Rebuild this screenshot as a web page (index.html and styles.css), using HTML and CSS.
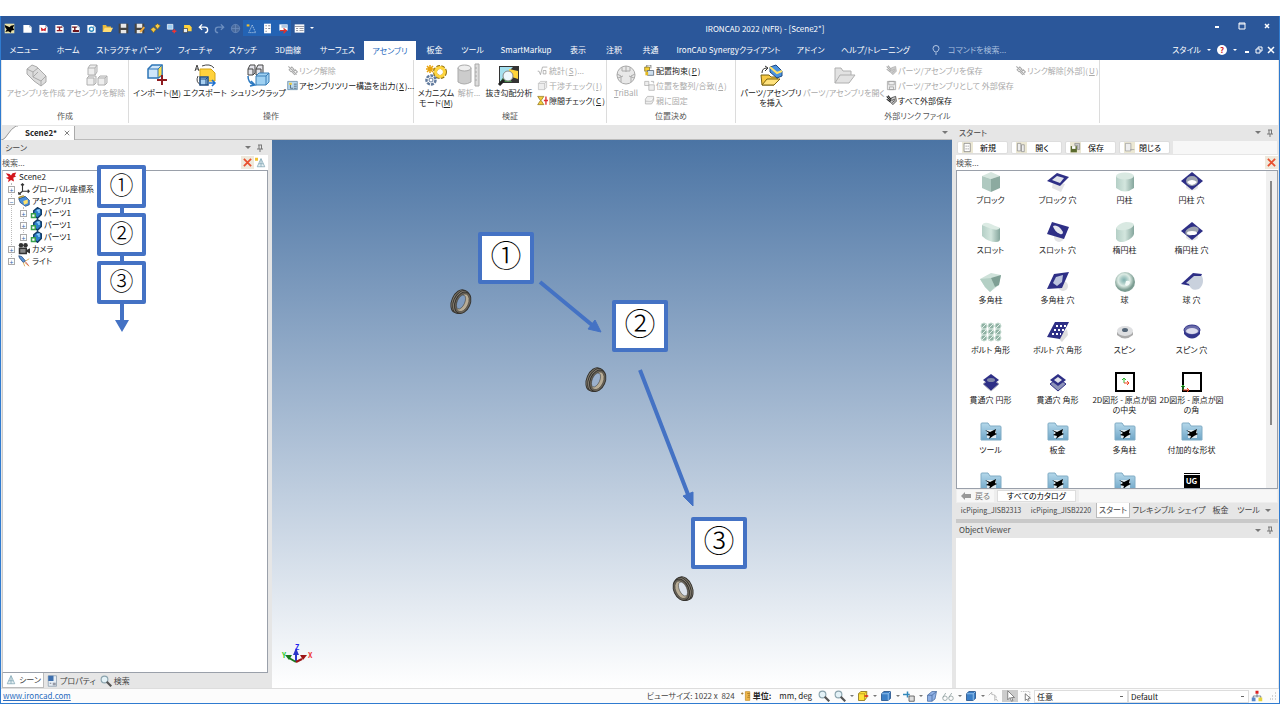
FILE: index.html
```html
<!DOCTYPE html>
<html lang="ja">
<head>
  <meta charset="UTF-8">
  <meta name="viewport" content="width=device-width, initial-scale=1.0">
  <title>IRONCAD 2022 (NFR) - [Scene2*]</title>
  <link rel="stylesheet" href="styles.css">
</head>
<body>
  <!-- shared icons -->
  <svg class="sprite" aria-hidden="true">
    <defs>
      <linearGradient id="green" x1="0" y1="0" x2="1" y2="0"><stop offset="0" stop-color="#b4cfc6"/><stop offset=".5" stop-color="#d3e6de"/><stop offset="1" stop-color="#84a59c"/></linearGradient>
      <radialGradient id="ball" cx=".45" cy=".4"><stop offset="0" stop-color="#7fb0ae"/><stop offset=".3" stop-color="#a9cbc6"/><stop offset=".6" stop-color="#dcebe4"/><stop offset="1" stop-color="#7c9d92"/></radialGradient>
      <linearGradient id="fold" x1="0" y1="0" x2="0" y2="1"><stop offset="0" stop-color="#b5d8ea"/><stop offset="1" stop-color="#6fa6c8"/></linearGradient>
    </defs>
    <symbol id="logo" viewBox="0 0 16 16"><path d="M1 3l5 1 2 2 2-3 5-1-2 4 2 1-4 2 1 5-4-2-4 3 1-4-4-2 4-1z"/></symbol>
    <symbol id="page" viewBox="0 0 16 16"><path d="M2 3h9l3 3v8H2z" fill="#fff"/><path d="M11 3v3h3" fill="none" stroke="#9ab" /></symbol>
    <symbol id="folder" viewBox="0 0 16 16"><path d="M1 13V3h5l1 2h6v3" fill="#e9b93a"/><path d="M1 13l3-6h12l-3 6z" fill="#ffdd75"/></symbol>
    <symbol id="floppy" viewBox="0 0 16 16"><path d="M1 1h14v14H1z" fill="#444"/><path d="M4 1h8v6H4zM4 10h8v5H4z" fill="#e8e8e8"/></symbol>
    <symbol id="cube" viewBox="0 0 16 16"><path d="M2 5l3-3h9v9l-3 3H2z" fill="#3c7fc6" stroke="#1c4a80"/><path d="M2 5h9v9M11 5l3-3" fill="none" stroke="#a9d2f7"/></symbol>
    <symbol id="cubegray" viewBox="0 0 16 16"><path d="M2 5l3-3h9v9l-3 3H2zM2 5h9v9M11 5l3-3" fill="#eee" stroke="#bbb"/></symbol>
    <symbol id="part" viewBox="0 0 16 16"><path d="M5 5l5-4 5 3v6l-5 5-5-4z" fill="#2b7fc9" stroke="#123c66" stroke-width="2"/><path d="M9 5l3-1v4" stroke="#8cd0ff" fill="none" stroke-width="2"/><path d="M1 8h7v7H1z" fill="#38a04c"/><path d="M3 10h3v3H3z" fill="#fff"/></symbol>
    <symbol id="asm" viewBox="0 0 16 16"><path d="M1 3l6-2 4 3-4 3-5-1z" fill="#ffd84a" stroke="#7b6410"/><path d="M1 5l9-3 5 5v6l-5 2-7-5z" fill="#4a8fdc" stroke="#1f4a82"/><path d="M7 8l6-2v5l-5 2z" fill="#ffe36b"/></symbol>
    <symbol id="pin" viewBox="0 0 8 8"><path d="M2 1h4M3 1v4M5.500 1v4M1 5h6M4 5v3" stroke="#777" fill="none"/></symbol>
    <symbol id="cross" viewBox="0 0 10 10"><path d="M1 1l8 8M9 1L1 9" stroke="#e8502e" stroke-width="2" fill="none"/></symbol>
    <symbol id="cone" viewBox="0 0 16 16"><path d="M8 2L3 13h10z" fill="#e6f0f3" stroke="#7fa4b3"/><path d="M5 9h6M8 3v10" stroke="#7fa4b3"/></symbol>
    <symbol id="lens" viewBox="0 0 16 16"><circle cx="6" cy="6" r="4.500" fill="#e4f2f7" stroke="#8aa3ad" stroke-width="1.500"/><path d="M9 9l6 6" stroke="#555" stroke-width="3"/></symbol>
    <symbol id="chain" viewBox="0 0 16 16"><path d="M2 2l12 12M3 7l4-4 3 3-4 4zM8 11l4-4 3 3-4 4z" fill="none" stroke="currentColor" stroke-width="1.500"/></symbol>
    <symbol id="extsave" viewBox="0 0 16 16"><path d="M1 2l6 7M3 1l5 6M1 6l5 4" fill="none" stroke="currentColor" stroke-width="1.500"/><path d="M8 4l6-2 1 7-5 5-4-4z" fill="#ccc" stroke="currentColor"/><path d="M8 8l5-2M9 11l4-3" stroke="currentColor"/></symbol>
    <symbol id="arrow" viewBox="0 0 16 16"><path d="M5 1v12l3-3 2 5 2-1-2-4h4z" fill="#fff" stroke="#666"/></symbol>
    <symbol id="catfolder" viewBox="0 0 24 20"><path d="M2 18V2q0-1 1-1h6l2 3h10q1 0 1 1v13z" fill="url(#fold)" stroke="#80acc5"/><path d="M8 8h9v8H8z" fill="#dce9f0"/><path d="M6 8l5 2 6-3-1 4 2 1-4 2-4 3 1-3-4-1 3-2z"/></symbol>
    <symbol id="ring" viewBox="0 0 26 30"><g transform="rotate(24 13 15)" stroke="#34322e"><ellipse cx="11" cy="15" rx="8" ry="13" fill="#8a8272"/><ellipse cx="13" cy="15" rx="8" ry="13" fill="#8a8376"/><ellipse cx="15" cy="15" rx="8" ry="12" fill="#6b655a"/><ellipse cx="15" cy="15" rx="6" ry="10" fill="#b8ad97" stroke-width=".5"/><ellipse cx="13" cy="15" rx="4" ry="8" class="hole" stroke-width=".5"/></g></symbol>
  </svg>

  <div class="app">
    <header class="titlebar">
      <div class="quick">
        <button aria-label="IRONCAD"><svg viewBox="0 0 16 16"><path d="M1 1h14v14H1z" fill="#e8e0a8"/><path d="M1 3l5 2 2 1 2-2 5-1-2 4 2 3-4 1-1 3-4-2-4 1 2-4-2-2z"/></svg></button>
        <button aria-label="新規"><svg><use href="#page"/></svg></button>
        <button aria-label="新規シーン"><svg viewBox="0 0 16 16"><use href="#page"/><path d="M4 6l4 3 4-3-1 6-3-1-3 1z" fill="#d3202a"/></svg></button>
        <button aria-label="新規図面"><svg viewBox="0 0 16 16"><use href="#page"/><path d="M4 5h8v2H9v3h3v2H4v-2h3V7H4z" fill="#8c1620"/></svg></button>
        <button aria-label="新規図面2"><svg viewBox="0 0 16 16"><use href="#page"/><path d="M3 5h7v2H8v3h5v3H4v-3h2V7H3z" fill="#6b1118"/></svg></button>
        <button aria-label="再生成"><svg viewBox="0 0 16 16"><use href="#page"/><circle cx="8" cy="9" r="3" fill="none" stroke="#2a8cc0" stroke-width="2"/></svg></button>
        <button aria-label="開く"><svg><use href="#folder"/></svg></button>
        <button aria-label="保存"><svg><use href="#floppy"/></svg></button>
        <button aria-label="別名保存"><svg viewBox="0 0 16 16"><use href="#floppy"/><path d="M8 12l6-7 2 2-6 7z" fill="#f0a93a"/></svg></button>
        <button aria-label="リンク"><svg viewBox="0 0 16 16"><path d="M1 9l4-3 4 3-4 5zM7 4l4-3 4 3-4 5z" fill="#f4c94b" stroke="#7a6418"/></svg></button>
        <button aria-label="追加"><svg viewBox="0 0 16 16"><path d="M2 2h8v7H2z" fill="#9dcdf3" stroke="#fff"/><path d="M12 9v6M9 12h6" stroke="#e33" stroke-width="2"/></svg></button>
        <button aria-label="出力"><svg viewBox="0 0 16 16"><path d="M3 3h8l3 3v6H3z" fill="#ffd23c"/><path d="M2 8h6v6H2z" fill="#e8eef5" stroke="#333"/></svg></button>
        <button aria-label="元に戻す"><svg viewBox="0 0 16 16"><path d="M6 2L2 6l4 4M2 6h8q4 0 4 4t-4 4" fill="none" stroke="#fff" stroke-width="2"/></svg></button>
        <button aria-label="やり直し"><svg viewBox="0 0 16 16"><path d="M10 2l4 4-4 4M14 6H6q-4 0-4 4t4 4" fill="none" stroke="#6d8fc0" stroke-width="2"/></svg></button>
        <button aria-label="TriBall"><svg viewBox="0 0 16 16"><circle cx="8" cy="8" r="6" fill="#4a6b9e" stroke="#6d8fc0"/><path d="M8 2v12M2 8h12" stroke="#6d8fc0"/></svg></button>
        <button class="on" aria-label="シーンブラウザ"><svg viewBox="0 0 16 16"><path d="M9 3l5 11H4z" fill="none" stroke="#cfe0f2" stroke-dasharray="2 1"/><path d="M1 2h4v3H1z" fill="#f1c232"/></svg></button>
        <button class="on" aria-label="プロパティ"><svg viewBox="0 0 16 16"><path d="M3 1h10v14H3z" fill="#fff"/><path d="M5 4h2M5 8h2M5 12h2M9 4h3M9 8h3" stroke="#556"/></svg></button>
        <button class="on" aria-label="カタログ"><svg viewBox="0 0 16 16"><path d="M2 2h12v9H2z" fill="#fff"/><path d="M3 11h8M8 8l4 3-4 4" stroke="#e0322c" fill="none" stroke-width="2"/><path d="M5 3h8v4H5z" fill="#b0c8e2"/></svg></button>
        <button aria-label="ウィンドウ"><svg viewBox="0 0 16 16"><path d="M1 2h14v12H1z" fill="#fff"/><path d="M1 5h14M3 8h3M3 11h3M8 8h6M8 11h6" stroke="#667"/></svg></button>
        <button aria-label="カスタマイズ" class="caret white more"></button>
      </div>
      <h1>IRONCAD 2022 (NFR) - [Scene2*]</h1>
      <div class="winbtns">
        <button aria-label="最小化"><svg viewBox="0 0 8 8"><path d="M2 5h4" stroke="#fff" stroke-width="2"/></svg></button>
        <button aria-label="最大化"><svg viewBox="0 0 8 8"><path d="M1 1h6v6H1z" fill="none" stroke="#fff"/><path d="M1 2h6" stroke="#fff"/></svg></button>
        <button aria-label="閉じる"><svg viewBox="0 0 8 8"><path d="M2 2l4 4M6 2L2 6" stroke="#fff" stroke-width="1.500"/></svg></button>
      </div>
    </header>

    <nav class="menubar">
      <div class="menus">
        <button>メニュー</button><button>ホーム</button><button>ストラクチャ パーツ</button><button>フィーチャ</button><button>スケッチ</button><button>3D曲線</button><button>サーフェス</button><button class="active">アセンブリ</button><button>板金</button><button>ツール</button><button>SmartMarkup</button><button>表示</button><button>注釈</button><button>共通</button><button>IronCAD Synergyクライアント</button><button>アドイン</button><button>ヘルプ/トレーニング</button>
      </div>
      <label class="cmd">
        <svg viewBox="0 0 8 10"><path d="M3 7Q1 5 1 3.500a3 3 0 0 1 6 0Q7 5 5 7zM3 9h2" fill="none" stroke="#b5c8e4"/></svg>
        <input type="text" placeholder="コマンドを検索..." aria-label="コマンドを検索">
      </label>
      <div class="style-menu">
        <button>スタイル</button><i class="caret white"></i>
        <button aria-label="ヘルプ" class="help">?</button><i class="caret white"></i>
        <button aria-label="最小化"><svg viewBox="0 0 8 8"><path d="M2 6h4" stroke="#fff" stroke-width="2"/></svg></button>
        <button aria-label="元に戻す"><svg viewBox="0 0 8 8"><path d="M3 3V1h4v4H5M1 3h4v4H1z" fill="none" stroke="#fff"/></svg></button>
        <button aria-label="閉じる"><svg viewBox="0 0 8 8"><path d="M1 1l6 6M7 1L1 7" stroke="#fff" stroke-width="1.500"/></svg></button>
      </div>
    </nav>

    <div class="ribbon">
      <section class="group g-create">
        <div class="tools">
          <button class="big" disabled><svg viewBox="0 0 24 24"><path d="M3 6l5-4 5 2 9 9v6l-5 4-7-5-7-7z" fill="#ddd" stroke="#aaa"/><path d="M3 6l6 3 5-4M9 9v5l8 4 5-5M9 14l5-5M17 18v5" fill="none" stroke="#aaa"/></svg><span>アセンブリを作成</span></button>
          <button class="big" disabled><svg viewBox="0 0 24 24"><path d="M4 5l2-3h7v7l-2 3H4zM3 15l2-2h7v7l-2 2H3zM14 15l2-2h7v7l-2 2h-7z" fill="#eee" stroke="#b0b0b0"/><path d="M4 5h7v7M11 5l2-3M3 15h7v7M14 15h7v7M21 15l2-2" fill="none" stroke="#b0b0b0"/></svg><span>アセンブリを解除</span></button>
        </div>
        <h2>作成</h2>
      </section>
      <section class="group g-ops">
        <div class="tools">
          <button class="big"><svg viewBox="0 0 24 24"><path d="M3 6l4-4h10v10l-4 3H3z" fill="#cfe6fa" stroke="#2e75b6" stroke-width="1.500"/><path d="M13 6l4-4v10l-4 3z" fill="#ffe04d" stroke="#2e75b6"/><path d="M3 6h10" stroke="#2e75b6"/><path d="M17 12v10M12 17h10" stroke="#8e1b1f" stroke-width="2"/></svg><span>インポート(<u>M</u>)</span></button>
          <button class="big"><svg viewBox="0 0 24 24"><path d="M2 8l2-6 2 6M3 6h2M5 13q-3 6 3 9M9 3q8-3 12 2" fill="none" stroke="#444"/><path d="M7 6h11l4 4v8H7z" fill="#ffd23c" stroke="#d5a514"/><path d="M7 14h8v8H7z" fill="#a9d0f0" stroke="#1f4e85" stroke-width="1.500"/><path d="M7 16h6v6M13 16l2-2" fill="none" stroke="#1f4e85"/><path d="M16 20h5M19 17l3 3-3 3" fill="none" stroke="#1b6fd0" stroke-width="1.500"/></svg><span>エクスポート</span></button>
          <button class="big wide"><svg viewBox="0 0 24 24"><path d="M2 6l2-4h5v8l-2 2H2zM10 6l2-4h5v8l-2 2h-5z" fill="#e4e4ea" stroke="#444"/><path d="M2 6h5v6M10 6h5v6" fill="none" stroke="#444"/><path d="M2 13q0 7 6 9M5 18l4 4-5 1" fill="none" stroke="#2a78c0" stroke-width="1.500"/><path d="M10 13l3-3h10v9l-3 3H10z" fill="#9fd1f2" stroke="#3b7fb7"/><path d="M10 13h10v9M20 13l3-3" fill="none" stroke="#3b7fb7"/></svg><span>シュリンクラップ</span></button>
          <div class="stack">
            <button disabled><svg class="gray"><use href="#chain"/></svg>リンク解除</button>
            <button><svg viewBox="0 0 16 16"><path d="M1 2h14v12H1z" fill="#b8d8ee" stroke="#5a7f9c"/><path d="M3 4h4v3H3z" fill="#f3cd3c"/><path d="M5 7v5h4M10 6h4M10 9h4M10 12h4" stroke="#345" fill="none"/></svg>アセンブリツリー構造を出力(<u>X</u>)...</button>
          </div>
        </div>
        <h2>操作</h2>
      </section>
      <section class="group g-check">
        <div class="tools">
          <button class="big narrow"><svg viewBox="0 0 24 24"><path d="M6 2v8M2 6h8M3 3l6 6M9 3L3 9" stroke="#e8a20c" stroke-width="1.500"/><circle cx="16" cy="9" r="5" fill="none" stroke="#927211" stroke-width="4" stroke-dasharray="3 1"/><circle cx="16" cy="9" r="4.500" fill="none" stroke="#ffd53e" stroke-width="3"/><circle cx="7" cy="17" r="4.500" fill="#fff" stroke="#627b9e" stroke-width="2.500" stroke-dasharray="3 1"/><circle cx="7" cy="17" r="2" fill="none" stroke="#627b9e"/></svg><span>メカニズム<br>モード(<u>M</u>)</span></button>
          <button class="big slim" disabled><svg viewBox="0 0 24 24"><path d="M1 5v14q6 4 13 0V5" fill="#ccc" stroke="#aaa"/><ellipse cx="7.500" cy="5" rx="6.500" ry="3" fill="#eee" stroke="#aaa"/><path d="M18 1h4v22h-4zM18 5h2M18 9h2M18 13h2M18 17h2" fill="#ddd" stroke="#aaa"/></svg><span>解析...</span></button>
          <button class="big"><svg viewBox="0 0 24 24"><path d="M2 3h20v17H2z" fill="#333"/><path d="M3 4h13l-7 7-6 8z" fill="#a5e0ee"/><path d="M12 6l9 2v8l-9-3z" fill="#ffd43b"/><path d="M3 19l6-8 6 8z" fill="#3f8d43"/><circle cx="11" cy="13" r="5" fill="#eef7fc" stroke="#888"/><path d="M7 17l-5 5" stroke="#222" stroke-width="3"/></svg><span>抜き勾配分析</span></button>
          <div class="stack">
            <button disabled><svg viewBox="0 0 16 16"><path d="M1 9h2l2 5 3-11h7M9 8h4v5H9z" fill="none" stroke="#999"/></svg>統計(<u>S</u>)...</button>
            <button disabled><svg><use href="#cubegray"/></svg>干渉チェック(<u>I</u>)</button>
            <button><svg viewBox="0 0 16 16"><path d="M1 2h9L6 8l4 6H1l4-6z" fill="#f3cd3c" stroke="#8a6f13"/><path d="M13 2v12M10 8h6" stroke="#d33" stroke-width="2"/></svg>隙間チェック(<u>C</u>)</button>
          </div>
        </div>
        <h2>検証</h2>
      </section>
      <section class="group g-pos">
        <div class="tools">
          <button class="big slim" disabled><svg viewBox="0 0 24 24"><circle cx="12" cy="12" r="9" fill="#e8e8e8" stroke="#aaa"/><path d="M12 3v6M4 15l5-2M20 15l-5-2M8 4v4h8V4M3 11l4 2v6M21 11l-4 2v6" fill="none" stroke="#aaa"/></svg><span><u>T</u>riBall</span></button>
          <div class="stack">
            <button><svg viewBox="0 0 16 16"><path d="M1 3h7v6H1z" fill="#f6cf35" stroke="#7b6410"/><path d="M4 3V0h6v5" fill="none" stroke="#555"/><path d="M5 8h9v7H5z" fill="#cfe0f0" stroke="#456"/><path d="M2 10h4v5H2z" fill="#e4b91f"/></svg>配置拘束(<u>P</u>)</button>
            <button disabled><svg viewBox="0 0 16 16"><path d="M1 2h6v6H1zM7 7h8v8H7zM10 2h4v3" fill="#eee" stroke="#aaa"/></svg>位置を整列/合致(<u>A</u>)</button>
            <button disabled><svg viewBox="0 0 16 16"><path d="M2 6l3-4h9v6l-3 5H2zM2 9h9l3-4" fill="#eee" stroke="#aaa"/></svg>親に固定</button>
          </div>
        </div>
        <h2>位置決め</h2>
      </section>
      <section class="group g-ext">
        <div class="tools">
          <button class="big insert"><svg viewBox="0 0 24 24"><path d="M2 12h8l2 2h7l-4 8H3z" fill="#f6c945" stroke="#7b6410"/><path d="M3 22l5-6h13l-6 6z" fill="#ffe27d" stroke="#7b6410"/><path d="M11 4l6-2 6 6v5l-5 2-7-6z" fill="#4a92df" stroke="#1f4a82"/><path d="M11 4l7 6 5-2" fill="none" stroke="#ffe36b" stroke-width="2"/><path d="M3 10q0-5 5-5M6 3l3 2-3 3" fill="none" stroke="#333"/></svg><span>パーツ/アセンブリ<br>を挿入</span></button>
          <button class="big open" disabled><svg viewBox="0 0 24 24"><path d="M3 20V5h6l2 3h8v4M3 20l5-8h15l-6 8z" fill="#e2e2e2" stroke="#b0b0b0"/></svg><span>パーツ/アセンブリを開く</span></button>
          <div class="stack wide">
            <button disabled><svg class="gray"><use href="#extsave"/></svg>パーツ/アセンブリを保存</button>
            <button disabled><svg viewBox="0 0 16 16"><path d="M2 2h12v12H2zM4 2h8v5H4zM5 10h6v4H5z" fill="#eee" stroke="#999"/></svg>パーツ/アセンブリとして 外部保存</button>
            <button><svg><use href="#extsave"/></svg>すべて外部保存</button>
          </div>
          <div class="stack">
            <button disabled><svg class="gray"><use href="#chain"/></svg>リンク解除[外部](<u>U</u>)</button>
          </div>
        </div>
        <h2>外部リンク ファイル</h2>
      </section>
    </div>

    <main class="workspace">
      <div class="left">
        <div class="doctabs">
          <div class="doctab"><svg viewBox="0 0 16 14"><path d="M0 14Q3 13 6 8T14 0h2v14z" fill="#fff"/><path d="M0 14Q3 13 6 8T14 0h2" fill="none" stroke="#999"/></svg><b>Scene2*</b><button aria-label="閉じる"><svg viewBox="0 0 8 8"><path d="M1 1l6 6M7 1L1 7" stroke="#555"/></svg></button></div>
          <i class="caret"></i>
        </div>
        <div class="split">
          <aside class="scene">
            <div class="panel-head"><span>シーン</span><i class="caret"></i><svg><use href="#pin"/></svg></div>
            <div class="search">
              <input type="text" placeholder="検索..." aria-label="シーンを検索">
              <button aria-label="クリア" class="clear"><svg><use href="#cross"/></svg></button>
              <button aria-label="フィルタ"><svg viewBox="0 0 16 16"><use href="#cone"/><path d="M0 1h4v4H0z" fill="#f1c232"/></svg></button>
            </div>
            <ul class="tree">
              <li><svg viewBox="0 0 16 16" fill="#d3161c"><use href="#logo"/></svg>Scene2
                <ul>
                  <li><button class="exp">+</button><svg viewBox="0 0 16 16"><path d="M6 1v10h9M6 11l-5 4M4 3l2-2 2 2M13 9l2 2-2 2M1 12v3h3" fill="none" stroke="#333" stroke-width="1.500"/></svg>グローバル座標系</li>
                  <li><button class="exp">−</button><svg><use href="#asm"/></svg>アセンブリ1
                    <ul>
                      <li><button class="exp">+</button><svg><use href="#part"/></svg>パーツ1</li>
                      <li><button class="exp">+</button><svg><use href="#part"/></svg>パーツ1</li>
                      <li><button class="exp">+</button><svg><use href="#part"/></svg>パーツ1</li>
                    </ul>
                  </li>
                  <li><button class="exp">+</button><svg viewBox="0 0 16 16" fill="#333"><circle cx="4" cy="3" r="3"/><circle cx="10" cy="3" r="3"/><path d="M1 6h11v9H1zM12 9l4-2v7l-4-2z"/><path d="M3 8h7v5H3z" fill="#888"/></svg>カメラ</li>
                  <li><button class="exp">+</button><svg viewBox="0 0 16 16"><path d="M1 1l4 1 5 6-3 2-5-6z" fill="#5b93d6" stroke="#23497c"/><path d="M10 8l5-3M9 10l6 5M7 10l2 5" stroke="#d89a2e"/><path d="M10 9l4 5" stroke="#c33"/></svg>ライト</li>
                </ul>
              </li>
            </ul>
            <div class="flow">
              <div class="num small">①</div>
              <div class="num small">②</div>
              <div class="num small">③</div>
              <svg viewBox="0 0 14 28"><path d="M5 0h4v16h5L7 28 0 16h5z" fill="#4472c4"/></svg>
            </div>
            <div class="side-tabs">
              <button class="active"><svg><use href="#cone"/></svg>シーン</button>
              <button><svg viewBox="0 0 16 16"><path d="M3 1h11v14H3z" fill="#e6eef6" stroke="#8899aa"/><path d="M3 1h7v7H3z" fill="#3d6fae"/><path d="M5 11h2M9 11h4M9 13h4" stroke="#556"/></svg>プロパティ</button>
              <button><svg><use href="#lens"/></svg>検索</button>
            </div>
          </aside>

          <div class="viewport">
            <svg class="ring r1"><use href="#ring"/></svg>
            <svg class="ring r2"><use href="#ring"/></svg>
            <svg class="ring r3"><use href="#ring"/></svg>
            <svg class="arrows" viewBox="0 0 680 548">
              <path d="M268 142l52 43M368 230l49 127" stroke="#4472c4" stroke-width="4"/>
              <path d="M329 192l-13-3 7-9zM421 366l-10-10 10-4z" fill="#4472c4" stroke="#4472c4" stroke-width="1"/>
            </svg>
            <div class="num n1">①</div>
            <div class="num n2">②</div>
            <div class="num n3">③</div>
            <svg class="axes" viewBox="0 0 34 24"><path d="M16 20V10" stroke="#2a35c9" stroke-width="2"/><path d="M13 13l3-7 3 7z" fill="#2a35c9"/><path d="M16 20L9 16" stroke="#187a1d" stroke-width="2"/><path d="M5 13l7 0-3 5z" fill="#187a1d"/><path d="M16 20l6-3" stroke="#9c1414" stroke-width="2"/><path d="M27 13h-7l3 5z" fill="#9c1414"/></svg>
            <span class="ax z">Z</span><span class="ax y">Y</span><span class="ax x">X</span>
          </div>
        </div>
      </div>

      <aside class="right">
        <section class="catalog">
          <div class="panel-head"><span>スタート</span><i class="caret"></i><svg><use href="#pin"/></svg></div>
          <div class="cat-tools">
            <button><svg viewBox="0 0 16 16"><path d="M0 0h16v16H0z" fill="#ece8d4"/><path d="M3 2h9v12H3z" fill="#fff" stroke="#777"/><path d="M5 6h2M8 6h2M5 10h2M8 10h2" stroke="#777"/></svg><span>新規</span></button>
            <button><svg viewBox="0 0 16 16"><path d="M0 0h16v16H0z" fill="#ece8d4"/><path d="M2 2h5v11H2zM8 4h4v10H8z" fill="#eee" stroke="#888"/></svg><span>開く</span></button>
            <button><svg viewBox="0 0 16 16"><path d="M0 0h16v16H0z" fill="#ece8d4"/><path d="M1 6h9v9H1z" fill="#5b6b2e"/><path d="M3 6h5v4H3z" fill="#fff"/><path d="M7 2h7v9h-3V5H7z" fill="#ccc" stroke="#888"/></svg><span>保存</span></button>
            <button><svg viewBox="0 0 16 16"><path d="M0 0h16v16H0z" fill="#ece8d4"/><path d="M2 2h8v11H2z" fill="#eee" stroke="#999"/><path d="M9 11h6" stroke="#999"/></svg><span>閉じる</span></button>
          </div>
          <div class="search">
            <input type="text" placeholder="検索..." aria-label="カタログを検索">
            <button aria-label="クリア" class="clear"><svg><use href="#cross"/></svg></button>
          </div>
          <div class="cat-body">
            <div class="items">
              <figure><svg viewBox="0 0 24 20"><path d="M3 4l9-4 9 4-9 3z" fill="#d6e6df"/><path d="M3 4l9 3v13l-9-4z" fill="#afc9c0"/><path d="M21 4l-9 3v13l9-4z" fill="#8caaa0"/></svg><figcaption>ブロック</figcaption></figure>
              <figure><svg viewBox="0 0 24 20"><path d="M7 9l12 3-4 8-9-4z" fill="#e4e4e6"/><path d="M1 9l10-8 12 4-9 9z" fill="#2e2f86"/><path d="M6 8l5-4 7 2-4 5z" fill="#dfe2ea"/></svg><figcaption>ブロック 穴</figcaption></figure>
              <figure><svg viewBox="0 0 24 20"><path d="M3 4v12q9 7 18 0V4z" fill="url(#green)"/><ellipse cx="12" cy="4" rx="9" ry="3.500" fill="#d9e9e2"/></svg><figcaption>円柱</figcaption></figure>
              <figure><svg viewBox="0 0 24 20"><path d="M6 11h12v5q-6 5-12 0z" fill="#e4e4e6"/><path d="M1 9l11-9 11 9-11 9z" fill="#2e2f86"/><ellipse cx="12" cy="9" rx="6" ry="5" fill="#9ea4b0"/><path d="M7 10q5-4 10 0-5 6-10 0" fill="#fff"/></svg><figcaption>円柱 穴</figcaption></figure>
              <figure><svg viewBox="0 0 24 20"><path d="M3 3v11q6 6 14 6 4 0 4-3V6z" fill="url(#green)"/><path d="M3 3q2-4 9-1t9 4q-2 3-8 1T3 3z" fill="#dcebe4"/></svg><figcaption>スロット</figcaption></figure>
              <figure><svg viewBox="0 0 24 20"><circle cx="13" cy="15" r="5" fill="#e4e4e6"/><path d="M1 12L6 0l17 5-5 12z" fill="#2e2f86"/><path d="M7 4q5-2 10 6 0 3-3 2-6-3-7-8" fill="#e4e6ee"/></svg><figcaption>スロット 穴</figcaption></figure>
              <figure><svg viewBox="0 0 24 20"><path d="M3 6v11q3 5 10 2t8-7V3z" fill="url(#green)"/><path d="M3 6q3-5 10-6 8 0 8 3-2 4-9 5-8 1-9-2z" fill="#d9e9e2"/></svg><figcaption>楕円柱</figcaption></figure>
              <figure><svg viewBox="0 0 24 20"><path d="M6 11h12v5q-6 5-12 0z" fill="#e4e4e6"/><path d="M1 9l11-9 11 9-11 9z" fill="#2e2f86"/><ellipse cx="12" cy="9" rx="7" ry="4" fill="#9ea4b0" transform="rotate(-20 12 9)"/><ellipse cx="12" cy="11" rx="5" ry="2" fill="#fff"/></svg><figcaption>楕円柱 穴</figcaption></figure>
              <figure><svg viewBox="0 0 24 20"><path d="M1 7l11-6 10 2-2 10-9 7-5-5z" fill="#cfe2da"/><path d="M1 7l11-1 4 9-5 5-5-5z" fill="#b4d0c5"/><path d="M12 6l10-3-2 10-4 2z" fill="#7e9f94"/></svg><figcaption>多角柱</figcaption></figure>
              <figure><svg viewBox="0 0 24 20"><circle cx="17" cy="14" r="5" fill="#e0e0e2"/><path d="M1 17L8 2l15-2-7 16z" fill="#2e2f86"/><path d="M7 11l3-6 7-2-1 7-5 4z" fill="#bcc4dd"/></svg><figcaption>多角柱 穴</figcaption></figure>
              <figure><svg viewBox="0 0 24 20"><circle cx="12" cy="10" r="10" fill="url(#ball)"/><path d="M13 9q4-1 4 2-2 4-5 2z" fill="#f4fbf8"/></svg><figcaption>球</figcaption></figure>
              <figure><svg viewBox="0 0 24 20"><path d="M1 12L13 1l9 1-6 13z" fill="#2e2f86"/><path d="M6 11l8-7 8 0q3 8-3 13-8 3-10-5z" fill="#c9d1dd"/></svg><figcaption>球 穴</figcaption></figure>
              <figure><svg viewBox="0 0 24 20"><g fill="#90b2a4" stroke="#c7dcd2"><circle cx="5" cy="4" r="3"/><circle cx="12" cy="4" r="3"/><circle cx="19" cy="4" r="3"/><circle cx="5" cy="10" r="3"/><circle cx="12" cy="10" r="3"/><circle cx="19" cy="10" r="3"/><circle cx="5" cy="16" r="3"/><circle cx="12" cy="16" r="3"/><circle cx="19" cy="16" r="3"/></g><path d="M3 6l4-4M10 6l4-4M17 6l4-4M3 12l4-4M10 12l4-4M17 12l4-4M3 18l4-4M10 18l4-4M17 18l4-4" stroke="#e4f0ea"/></svg><figcaption>ボルト 角形</figcaption></figure>
              <figure><svg viewBox="0 0 24 20"><path d="M12 16l9-9 1 6-6 7z" fill="#ddd"/><path d="M1 15L9 0h14l-9 17z" fill="#2e2f86"/><path d="M10 4h10M8 8h10M6 12h9" stroke="#fff" stroke-width="2" stroke-dasharray="2 2"/></svg><figcaption>ボルト 穴 角形</figcaption></figure>
              <figure><svg viewBox="0 0 24 20"><path d="M4 10v3q8 7 16 0v-3z" fill="#aaa"/><ellipse cx="12" cy="9" rx="8" ry="5" fill="#dedfe1"/><ellipse cx="12" cy="8" rx="3" ry="2" fill="#567"/></svg><figcaption>スピン</figcaption></figure>
              <figure><svg viewBox="0 0 24 20"><path d="M4 8v4q8 9 16 0V8z" fill="#34368c"/><ellipse cx="12" cy="8" rx="8" ry="5" fill="#686aa8" stroke="#34368c"/><ellipse cx="12" cy="9" rx="6" ry="3" fill="#dde"/></svg><figcaption>スピン 穴</figcaption></figure>
              <figure><svg viewBox="0 0 24 20"><path d="M4 12l8-6 8 6-8 7z" fill="#2e2f86" stroke="#aab"/><path d="M4 8l8-6 8 6-8 6z" fill="#2e2f86"/><ellipse cx="12" cy="8" rx="4" ry="2" fill="#8087a8"/></svg><figcaption>貫通穴 円形</figcaption></figure>
              <figure><svg viewBox="0 0 24 20"><path d="M4 12l8-6 8 6-8 7z" fill="#8d93b8" stroke="#2e2f86"/><path d="M4 8l8-6 8 6-8 6z" fill="#2e2f86"/><path d="M8 8l4-3 4 3-4 3z" fill="#e0e2ea"/></svg><figcaption>貫通穴 角形</figcaption></figure>
              <figure><svg viewBox="0 0 24 20"><path d="M3 1h18v18H3z" fill="#fff" stroke="#000" stroke-width="2"/><path d="M11 11V6M9 8l2-2 2 2" stroke="#3b3" fill="none"/><path d="M11 11h5M14 9l2 2-2 2" stroke="#e42" fill="none"/></svg><figcaption>2D図形 - 原点が図<br>の中央</figcaption></figure>
              <figure><svg viewBox="0 0 24 20"><path d="M3 1h18v18H3z" fill="#fff" stroke="#000" stroke-width="2"/><path d="M3 18v-5M1 15l2-2 2 2" stroke="#3b3" fill="none"/><path d="M3 18h6M7 16l2 2-2 2" stroke="#e42" fill="none"/></svg><figcaption>2D図形 - 原点が図<br>の角</figcaption></figure>
              <figure><svg><use href="#catfolder"/></svg><figcaption>ツール</figcaption></figure>
              <figure><svg><use href="#catfolder"/></svg><figcaption>板金</figcaption></figure>
              <figure><svg><use href="#catfolder"/></svg><figcaption>多角柱</figcaption></figure>
              <figure><svg><use href="#catfolder"/></svg><figcaption>付加的な形状</figcaption></figure>
              <figure><svg><use href="#catfolder"/></svg></figure>
              <figure><svg><use href="#catfolder"/></svg></figure>
              <figure><svg><use href="#catfolder"/></svg></figure>
              <figure><div class="book">UG</div></figure>
            </div>
            <div class="scrollbar"></div>
          </div>
          <div class="cat-nav">
            <button disabled><svg viewBox="0 0 10 8"><path d="M0 4l4-4v2h6v4H4v2z" fill="#999"/></svg>戻る</button>
            <button class="all">すべてのカタログ</button>
          </div>
          <div class="cat-tabs">
            <button class="latin">icPiping_JISB2313</button><button class="latin">icPiping_JISB2220</button><button class="active">スタート</button><button>フレキシブル シェイプ</button><button>板金</button><button>ツール</button><i class="caret"></i>
          </div>
        </section>
        <div class="hsplit"></div>
        <section class="viewer">
          <div class="panel-head"><span>Object Viewer</span><i class="caret"></i><svg><use href="#pin"/></svg></div>
          <div class="viewer-body"></div>
        </section>
      </aside>
    </main>

    <footer class="status">
      <a href="#">www.ironcad.com</a>
      <span class="size">ビューサイズ: 1022 x&nbsp; 824</span>
      <div class="units"><svg viewBox="0 0 16 16"><path d="M7 1h7v14H7z" fill="#efb64a" stroke="#b98218"/><path d="M10 4h4M11 7h3M10 10h4M2 2v4M0 4h4" stroke="#8a5f0e"/></svg><b>単位:</b><span>mm, deg</span></div>
      <div class="view-tools">
        <button aria-label="ズーム"><svg><use href="#lens"/></svg></button>
        <button aria-label="全体表示"><svg><use href="#lens"/></svg></button><i class="caret"></i>
        <button aria-label="表示方向"><svg viewBox="0 0 16 16"><path d="M2 5l3-3h8v8l-3 4H2z" fill="#ffe03a" stroke="#7b6410"/><path d="M2 5h8v9M10 5l3-3" fill="none" stroke="#b0951a"/><path d="M10 8h5" stroke="#d22" stroke-width="2"/></svg></button><i class="caret"></i>
        <button aria-label="表示スタイル"><svg><use href="#cube"/></svg></button><i class="caret"></i>
        <button aria-label="アンカー"><svg viewBox="0 0 16 16"><path d="M0 6h9M6 2v8" stroke="#38b" stroke-width="2"/><path d="M8 8h7v7H8z" fill="#ddd" stroke="#444"/></svg></button><i class="caret"></i>
        <button aria-label="面"><svg viewBox="0 0 16 16"><path d="M2 7l6-5h6l-2 10-4 3H2z" fill="#8fb0e4" stroke="#456a9f"/><path d="M2 7h6v8M8 7l6-5" fill="none" stroke="#456a9f"/></svg></button>
        <button aria-label="表示切替"><svg viewBox="0 0 16 16"><circle cx="4" cy="11" r="3" fill="none" stroke="#899"/><circle cx="12" cy="11" r="3" fill="none" stroke="#899"/><path d="M1 10l4-6M9 10l4-6" stroke="#899"/></svg></button><i class="caret"></i>
        <button aria-label="ボディ"><svg><use href="#cube"/></svg></button><i class="caret"></i>
        <button aria-label="再選択"><svg viewBox="0 0 16 16"><path d="M1 7l4-4v3q6 0 6 5" fill="none" stroke="#aaa"/><path d="M9 7v7l2-2 2 3" fill="none" stroke="#aaa"/></svg></button>
        <button aria-label="選択" class="pressed"><svg><use href="#arrow"/></svg></button>
        <button aria-label="範囲選択"><svg viewBox="0 0 16 16"><path d="M1 2h12v8" fill="none" stroke="#bbb" stroke-dasharray="2 1"/><path d="M7 5v9l2-2 2 3 1-1-1-3h3z" fill="#fff" stroke="#555"/></svg></button>
      </div>
      <select class="sel-filter" aria-label="選択フィルタ"><option>任意</option></select>
      <select class="sel-config" aria-label="構成"><option>Default</option></select>
      <button aria-label="構成ツリー"><svg viewBox="0 0 16 16"><path d="M8 5v5M3 11V8h10v3" fill="none" stroke="#567"/><path d="M6 1h4v4H6z" fill="#d22"/><path d="M1 10h5v5H1z" fill="#5a88c8"/><path d="M10 10h5v5h-5z" fill="#e6d43a"/></svg></button>
      <svg class="grip" viewBox="0 0 8 8"><path d="M6 1h1M3 4h1M6 4h1M1 7h1M3 7h1M6 7h1" stroke="#aaa"/></svg>
    </footer>
  </div>
</body>
</html>
```
FILE: styles.css
```css
* {
  box-sizing: border-box;
}

body {
  margin: 0;
  background: #fff;
  color: #444;
  font: 8px/12px "Noto Sans CJK JP", sans-serif;
  font-feature-settings: "palt";
}

button, input, select {
  font: inherit;
  font-feature-settings: inherit;
  color: inherit;
  background: none;
  border: 0;
  padding: 0;
  margin: 0;
  white-space: nowrap;
}

button, svg {
  flex: none;
}

svg {
  display: block;
  width: 12px;
  height: 12px;
}

h1, h2, ul, figure {
  margin: 0;
  padding: 0;
  font-size: inherit;
  font-weight: normal;
}

.sprite {
  position: absolute;
  width: 0;
  height: 0;
}

.app {
  display: flex;
  flex-direction: column;
  height: calc(100vh - 32px);
  margin: 16px 0;
  border: solid #2f7bd0;
  border-width: 0 1px 1px;
  background: #e6e6e6;
}

.caret {
  display: flex;
  align-items: center;
  justify-content: center;
  flex: none;
  width: 8px;
}

.caret::before {
  content: "";
  border: 3px solid transparent;
  border-top-color: #777;
  border-bottom: 0;
}

.caret.white::before {
  border-width: 2px 2px 0;
  border-top-color: #fff;
}

/* title bar */
.titlebar {
  display: flex;
  align-items: center;
  height: 24px;
  background: #2b579a;
  color: #fff;
}

.quick {
  display: flex;
  align-items: center;
}

.quick button {
  display: flex;
  align-items: center;
  justify-content: center;
  width: 16px;
  height: 16px;
}

.quick button:first-child {
  margin-right: 2px;
}

.quick .more {
  width: 10px;
}

.quick svg {
  width: 11px;
  height: 11px;
}

.quick .on {
  background: #2363b4;
}

.titlebar h1 {
  flex: 1;
  padding-top: 2px;
  text-align: center;
}

.winbtns {
  display: flex;
  gap: 17px;
  padding: 0 8px 4px 0;
}

.winbtns svg, .style-menu svg {
  width: 8px;
  height: 8px;
}

/* menu bar */
.menubar {
  display: flex;
  height: 20px;
  background: #2b579a;
  color: #fff;
}

.menus {
  display: grid;
  grid-template-columns: 46px 42px 80px 52px 44px 46px 53px 52px 37px 39px 68px 36px 36px 37px 119px 45px 85px;
}

.menus .active {
  background: #fff;
  color: #2a6cc0;
  margin-top: 1px;
}

.cmd {
  display: flex;
  flex: 1;
  align-items: center;
  gap: 8px;
  padding-left: 14px;
}

.cmd svg {
  width: 8px;
  height: 10px;
}

.cmd input {
  width: 80px;
}

.cmd input::placeholder {
  color: #a9bfdf;
}

.style-menu {
  display: flex;
  align-items: center;
  gap: 4px;
  padding-right: 4px;
}

.help {
  width: 10px;
  height: 10px;
  border-radius: 50%;
  background: #fff;
  color: #c22;
  font-weight: bold;
  line-height: 10px;
}

/* ribbon */
.ribbon {
  display: flex;
  height: 65px;
  margin: 0 1px;
  background: #fff;
}

.group {
  display: flex;
  flex-direction: column;
  border-right: 1px solid #dcdcdc;
  margin-bottom: 2px;
}

.tools {
  display: flex;
  flex: 1;
  padding: 3px 0 0 4px;
}

.group h2 {
  text-align: center;
  line-height: 14px;
  color: #555;
}

.g-create { width: 127px; }
.g-ops { width: 285px; }
.g-check { width: 193px; }
.g-pos { width: 129px; }
.g-ext { width: 364px; }

.big {
  display: flex;
  flex-direction: column;
  align-items: center;
  width: 50px;
  line-height: 10px;
}

.g-create .big {
  width: 60px;
}

.g-ops .big {
  width: 48px;
}

.g-ops .big.wide {
  width: 58px;
}

.big svg {
  width: 24px;
  height: 24px;
  margin-bottom: 1px;
}

.big.narrow { width: 36px; }
.big.slim { width: 30px; }
.big.insert { width: 62px; }
.big.open { width: 84px; }

.stack {
  padding-left: 3px;
}

.g-ops .stack, .stack.wide {
  padding-left: 0;
}

.stack.wide {
  width: 126px;
}

.stack button {
  display: flex;
  align-items: center;
  gap: 1px;
  height: 15px;
}

.stack svg {
  width: 11px;
  height: 11px;
}

.ribbon button {
  color: #222;
}

.ribbon button:disabled {
  color: #aaa;
}

.ribbon .gray {
  color: #aaa;
}

/* workspace */
.workspace {
  display: flex;
  flex: 1;
  min-height: 0;
}

.left {
  display: flex;
  flex: 1;
  flex-direction: column;
  min-width: 0;
}

.doctabs {
  display: flex;
  justify-content: space-between;
  height: 15px;
  padding: 1px 3px 0 1px;
  border-bottom: 1px solid #bbb;
}

.doctab {
  display: flex;
  align-items: center;
  width: 73px;
  margin-bottom: -1px;
  background: linear-gradient(to right, transparent 15px, #fff 15px);
  border-right: 1px solid #aaa;
}

.doctab > svg {
  width: 16px;
  height: 14px;
}

.doctab b {
  flex: 1;
  padding-left: 7px;
  color: #222;
}

.doctab button {
  padding-right: 4px;
}

.doctab button svg {
  width: 6px;
  height: 6px;
}

.split {
  display: flex;
  flex: 1;
  min-height: 0;
}

.panel-head {
  display: flex;
  align-items: center;
  gap: 4px;
  height: 15px;
  padding: 0 4px 0 3px;
}

.panel-head span {
  flex: 1;
}

.panel-head svg {
  width: 8px;
  height: 8px;
}

.scene {
  position: relative;
  display: flex;
  flex-direction: column;
  width: 267px;
  margin-right: 4px;
  padding-left: 1px;
}

.search {
  display: flex;
  align-items: center;
  height: 15px;
  background: #fff;
}

.search input {
  flex: 1;
  min-width: 0;
}

.search input::placeholder {
  color: #555;
}

.search button {
  padding: 1px;
}

.search .clear {
  padding: 2px;
  background: #efe9dc;
}

.clear svg {
  width: 9px;
  height: 9px;
}

.tree {
  flex: 1;
  padding: 0 0 0 2px;
  background: #fff;
  border: 1px solid #9aa0aa;
  border-left-color: #ccc;
  list-style: none;
  color: #222;
}

.tree ul {
  position: relative;
  list-style: none;
  padding-left: 3px;
}

.tree ul ul {
  padding-left: 12px;
}

/* dotted guide line behind the expanders */
.tree ul::before {
  content: "";
  position: absolute;
  left: 6px;
  top: 0;
  bottom: 6px;
  border-left: 1px dotted #bbb;
}

.tree ul ul::before {
  left: 15px;
}

.tree li svg {
  display: inline-block;
  vertical-align: top;
  margin-right: 2px;
}

.exp {
  position: relative;
  width: 7px;
  height: 7px;
  margin: 3px 3px 0 0;
  vertical-align: top;
  border: 1px solid #aaa;
  background: #fff;
  color: #36a;
  font-size: 7px;
  line-height: 4px;
}

.side-tabs {
  display: flex;
  height: 15px;
}

.side-tabs button {
  display: flex;
  align-items: center;
  gap: 2px;
  padding: 0 2px;
}

.side-tabs .active {
  background: #fff;
  border: 1px solid #bbb;
  border-top: 0;
}

/* step markers */
.num {
  display: flex;
  justify-content: center;
  width: 56px;
  height: 52px;
  border: 4px solid #4472c4;
  border-radius: 2px;
  background: #fff;
  color: #000;
  font-size: 31px;
  font-weight: 300;
  line-height: 36px;
}

.num.small {
  width: 49px;
  height: 43px;
  font-size: 24px;
  line-height: 29px;
}

.flow {
  position: absolute;
  left: 96px;
  top: 25px;
  display: flex;
  flex-direction: column;
  align-items: center;
  gap: 5px;
  background: linear-gradient(#4472c4, #4472c4) center top / 4px 90% no-repeat;
}

.flow svg {
  width: 14px;
  height: 28px;
  margin-top: -5px;
}

.viewport {
  position: relative;
  flex: 1;
  min-width: 0;
  background: linear-gradient(#4b74a4, #fff);
}

.viewport > * {
  position: absolute;
}

.arrows {
  left: 0;
  top: 0;
  width: 680px;
  height: 548px;
}

.n1 { left: 206px; top: 92px; }
.n2 { left: 340px; top: 160px; }
.n3 { left: 419px; top: 377px; }

.ring {
  width: 26px;
  height: 28px;
}

.r1 { left: 176px; top: 148px; color: #809cbf; }
.r2 { left: 311px; top: 226px; color: #9bb0cc; }
.r3 { left: 398px; top: 435px; color: #dce3ed; transform: scaleX(-1); }

.hole {
  fill: currentColor;
}

.axes {
  left: 8px;
  bottom: 22px;
  width: 34px;
  height: 24px;
}

.ax {
  font-size: 7px;
  line-height: 8px;
  font-weight: bold;
}

.z { left: 23px; bottom: 37px; color: #22e; }
.y { left: 10px; bottom: 29px; color: #2c2; }
.x { left: 36px; bottom: 29px; color: #e33; }

/* catalog browser */
.right {
  display: grid;
  grid-template-rows: 19fr 5px 8fr;
  width: 324px;
  margin-left: 3px;
  padding: 0 1px;
}

.catalog {
  display: flex;
  flex-direction: column;
  min-height: 0;
}

.cat-tools {
  display: flex;
  gap: 3px;
  height: 15px;
  padding: 1px;
}

.cat-tools button {
  display: flex;
  align-items: center;
  width: 51px;
  padding: 0 4px;
  border: 1px solid #ddd;
  border-radius: 2px;
  background: #fff;
  color: #000;
}

.cat-tools span {
  flex: 1;
}

.cat-tools svg {
  width: 11px;
  height: 11px;
}

.cat-tools::after {
  content: "";
  flex: 1;
  background: #f7f7f7;
}

.cat-body {
  display: flex;
  flex: 1;
  min-height: 0;
  overflow: hidden;
  background: #fff;
  border: 1px solid #9aa0aa;
}

.items {
  flex: 1;
  display: grid;
  grid-template-columns: repeat(4, 67px);
  grid-auto-rows: 50px;
  color: #222;
}

.items figure {
  display: flex;
  flex-direction: column;
  align-items: center;
  padding-top: 1px;
  text-align: center;
  line-height: 10px;
}

.items svg {
  width: 24px;
  height: 20px;
  margin-bottom: 3px;
}

.items figcaption {
  white-space: nowrap;
}

.book {
  width: 16px;
  height: 20px;
  border-top: 3px double #fff;
  background: #000;
  color: #fff;
  font-weight: bold;
  line-height: 11px;
}

.scrollbar {
  width: 11px;
  background: linear-gradient(#888, #888) 4px 10px / 2px 244px no-repeat #f0f0f0;
}

.cat-nav {
  display: flex;
  gap: 3px;
  height: 14px;
  padding: 1px;
  background: #eee;
}

.cat-nav button {
  display: flex;
  align-items: center;
  justify-content: center;
  gap: 4px;
  width: 37px;
  background: #f7f7f7;
}

.cat-nav button:disabled {
  color: #777;
}

.cat-nav .all {
  width: 79px;
  background: #fff;
  border: 1px solid #ddd;
  color: #000;
}

.cat-nav svg {
  width: 10px;
  height: 8px;
}

.cat-nav::after {
  content: "";
  flex: 1;
  background: #f7f7f7;
}

.cat-tabs {
  display: grid;
  grid-template-columns: 70px 70px 34px 78px 25px 31px 12px;
  height: 15px;
}

.cat-tabs .latin {
  font-size: 7px;
}

.cat-tabs .active {
  background: #fff;
  border: 1px solid #bbb;
  border-top: 0;
}

.hsplit {
  background: #c9c9c9;
  border: solid #e6e6e6;
  border-width: 1px 0 0;
}

.viewer {
  display: flex;
  flex-direction: column;
}

.viewer-body {
  flex: 1;
  background: #fff;
}

/* status bar */
.status {
  display: flex;
  align-items: center;
  height: 15px;
  padding: 0 2px;
  border-top: 1px solid #ddd;
  background: #fcfcfc;
}

.status a {
  flex: 1;
  color: #2a6cc0;
}

.units {
  display: flex;
  align-items: center;
  gap: 2px;
  padding-left: 6px;
  color: #222;
}

.units svg {
  width: 10px;
  height: 10px;
}

.units span {
  padding: 0 4px 0 6px;
}

.view-tools {
  display: flex;
}

.view-tools button {
  display: flex;
  justify-content: center;
  width: 16px;
}

.view-tools .caret {
  width: 7px;
}

.view-tools .caret::before {
  border-width: 2px 2px 0;
}

.pressed {
  background: #ccc;
}

select {
  appearance: none;
  height: 13px;
  padding-left: 2px;
  border: 1px solid #ddd;
  background: linear-gradient(#666, #666) right 4px center / 3px 1px no-repeat #fff;
  color: #111;
}

.sel-filter {
  width: 94px;
}

.sel-config {
  width: 121px;
  margin-right: 2px;
}

.grip {
  width: 8px;
  height: 8px;
  margin-left: 6px;
}
```
